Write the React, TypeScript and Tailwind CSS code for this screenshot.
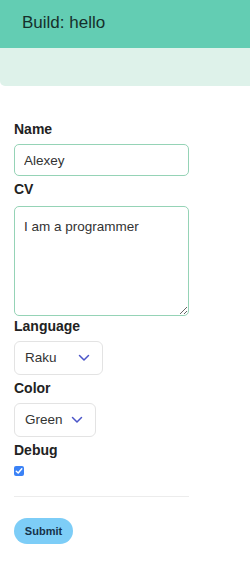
export default function App() {
  return (
    <div className="min-h-[564px] bg-white font-['Liberation_Sans',Arial,sans-serif] text-[#222]">
      {/* header */}
      <div className="h-[48px] bg-[#63cdb3] pl-[22px] pt-[10px] text-[17px] text-[#16302b]">Build: hello</div>
      <div className="h-[38px] rounded-bl-[5px] bg-[#def2ea]" />

      <form className="flex w-[189px] flex-col pl-[14px] pt-[34px]">
        <label className="text-[14px] font-bold leading-[18px]">Name</label>
        <input
          defaultValue="Alexey"
          className="mt-[6px] h-[32px] w-[175px] rounded-[5px] border border-[#95d3b6] px-[9px] text-[13.5px] text-[#333] outline-none"
        />
        <label className="mt-[4px] text-[14px] font-bold leading-[18px]">CV</label>
        <textarea
          defaultValue="I am a programmer"
          className="mt-[8px] h-[110px] w-[175px] rounded-[5px] border border-[#95d3b6] px-[9px] pt-[11px] text-[13.5px] leading-[18px] text-[#333] outline-none"
        />
        <label className="mt-[1px] text-[14px] font-bold leading-[18px]">Language</label>
        <div className="mt-[6px] flex h-[34px] w-[89px] items-center justify-between rounded-[6px] border border-[#e3e3e3] pl-[10px] pr-[12px] text-[13.5px] text-[#333]">
          <span>Raku</span>
          <Chevron />
        </div>
        <label className="mt-[4px] text-[14px] font-bold leading-[18px]">Color</label>
        <div className="mt-[6px] flex h-[34px] w-[82px] items-center justify-between rounded-[6px] border border-[#e3e3e3] pl-[10px] pr-[12px] text-[13.5px] text-[#333]">
          <span>Green</span>
          <Chevron />
        </div>
        <label className="mt-[4px] text-[14px] font-bold leading-[18px]">Debug</label>
        <div className="mt-[7px] flex h-[10px] w-[10px] items-center justify-center rounded-[2px] bg-[#3b82f6]">
          <svg width="8" height="8" viewBox="0 0 8 8">
            <path d="M1.3 4.2 L3.2 6 L6.8 1.8" fill="none" stroke="white" strokeWidth="1.5" strokeLinecap="round" strokeLinejoin="round" />
          </svg>
        </div>
        <hr className="mt-[20px] border-t border-[#ececec]" />
        <button
          type="button"
          className="mt-[21px] h-[26px] w-[59px] rounded-full bg-[#7dcdf7] text-[11px] font-bold text-[#15324a]"
        >
          Submit
        </button>
      </form>
    </div>
  );
}

function Chevron() {
  return (
    <svg width="12" height="8" viewBox="0 0 12 8">
      <path d="M1.5 1.5 L6 6 L10.5 1.5" fill="none" stroke="#4b55c8" strokeWidth="1.5" strokeLinecap="round" strokeLinejoin="round" />
    </svg>
  );
}
